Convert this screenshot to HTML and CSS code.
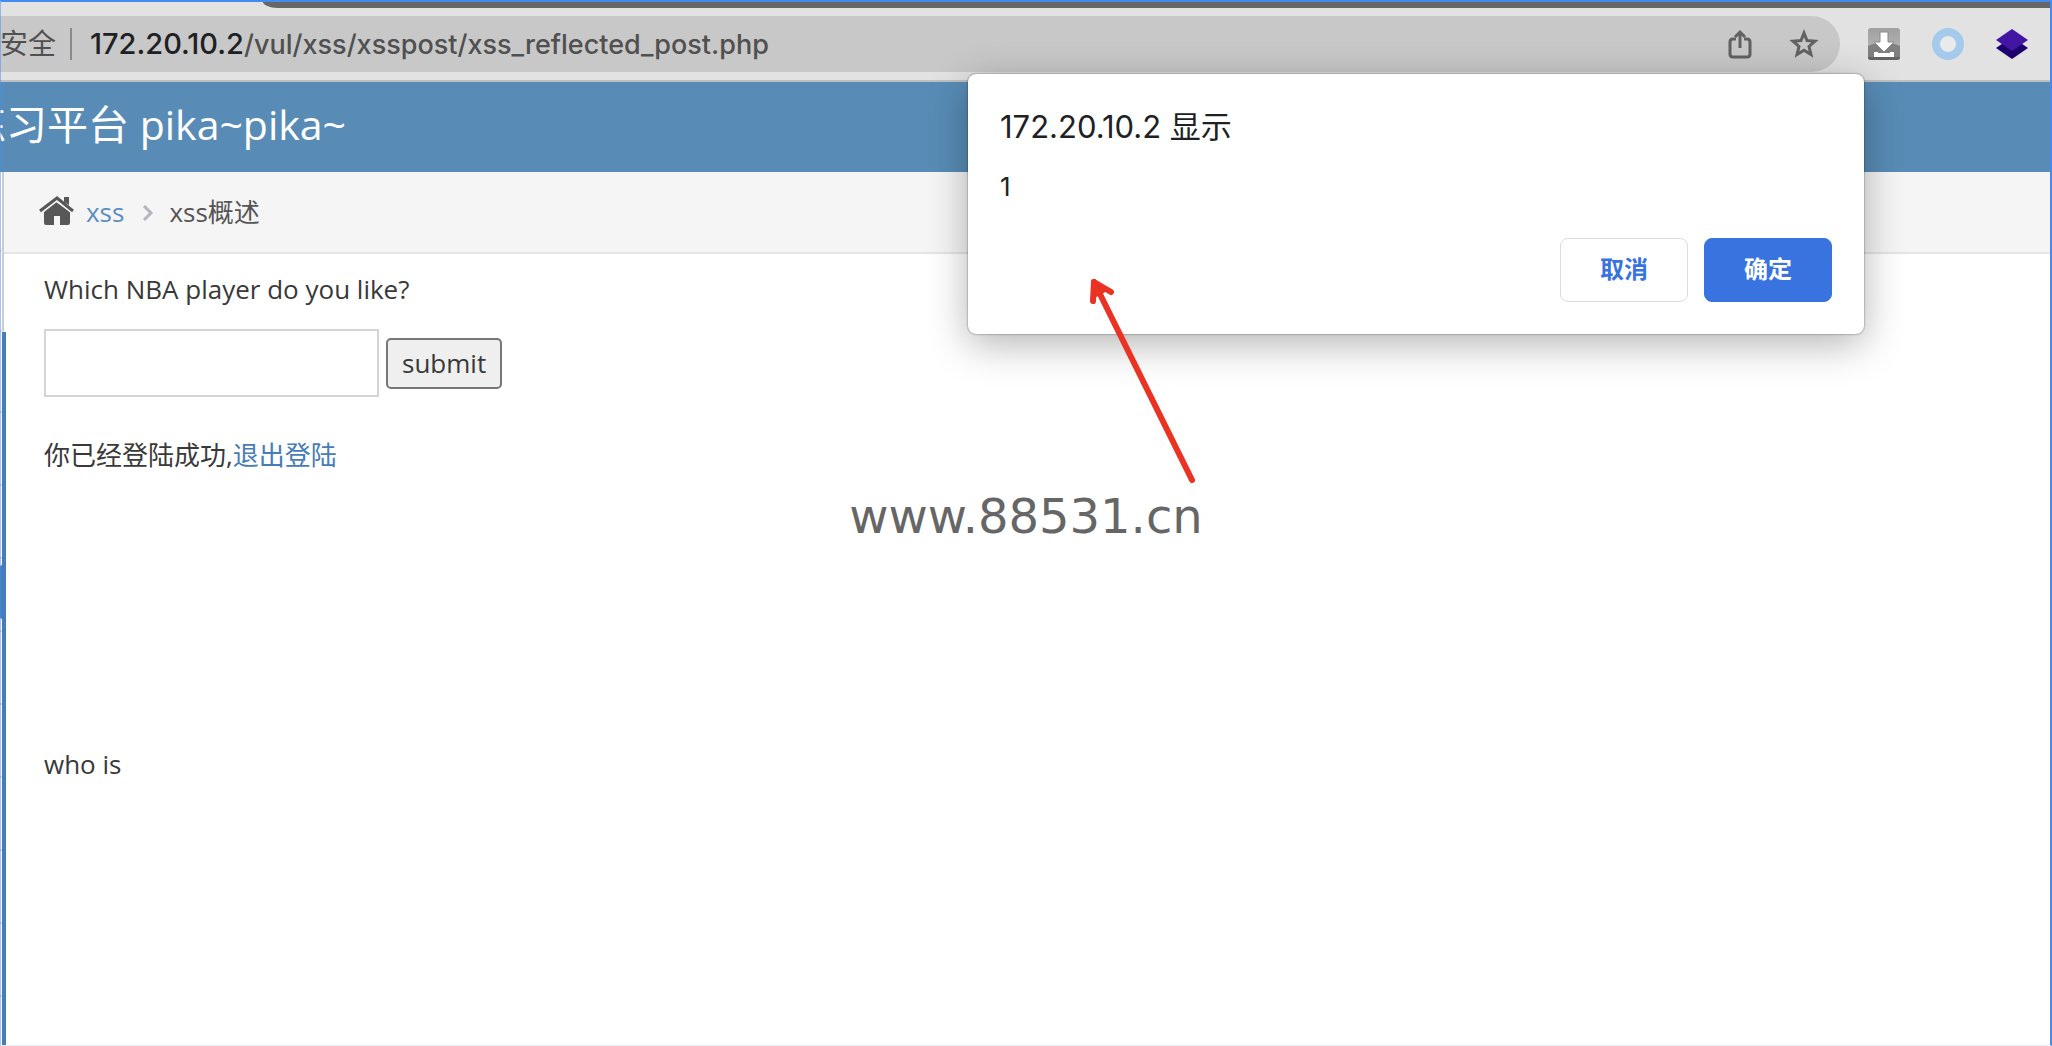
FILE: index.html
```html
<!DOCTYPE html>
<html lang="zh-CN">

<head>
	<meta charset="UTF-8">
	<title>xss概述</title>
	<meta name="viewport" content="width=device-width, initial-scale=1.0">
	<link rel="stylesheet" href="styles.css">
</head>

<body>

	<div class="tabs">
		<div class="tabs-vides"></div>
	</div>

	<div class="barre">
		<div class="adresse">
			<span class="securite">安全</span>
			<span class="url"><strong>172.20.10.2</strong>/vul/xss/xsspost/xss_reflected_post.php</span>
			<button class="icone" type="button" aria-label="分享">
				<svg width="32" height="32" viewBox="0 0 32 32" fill="none" stroke="#616161" stroke-width="3">
					<path d="M12 11H9Q6 11 6 14V26Q6 29 9 29H23Q26 29 26 26V14Q26 11 23 11H20" />
					<path d="M16 20V4M11 9L16 4L21 9" />
				</svg>
			</button>
			<button class="icone" type="button" aria-label="收藏">
				<svg width="32" height="32" viewBox="0 0 32 32" fill="none" stroke="#616161" stroke-width="3">
					<path d="M16 5L19 12.500L27 13.200L21 18.500L23 26.500L16 22.300L9 26.500L11 18.500L5 13.200L13 12.500Z" />
				</svg>
			</button>
		</div>

		<div class="extensions">
			<button class="icone" type="button" aria-label="下载">
				<svg width="32" height="32" viewBox="0 0 32 32">
					<defs>
						<linearGradient id="gris" x1="0" y1="0" x2="0" y2="1">
							<stop offset="0" stop-color="#a0a0a0" />
							<stop offset="1" stop-color="#bdbdbd" />
						</linearGradient>
					</defs>
					<rect width="32" height="32" rx="3" fill="url(#gris)" />
					<path d="M0 18L5 16H27L32 18V29Q32 32 29 32H3Q0 32 0 29Z" fill="#808080" />
					<path d="M0 29H32Q32 32 29 32H3Q0 32 0 29Z" fill="#646464" />
					<path d="M12 4H20V14H26L16 24L6 14H12Z" fill="#fff" stroke="#8a8a8a" />
					<path d="M6 24H10V25H22V24H26V29H6Z" fill="#fff" />
				</svg>
			</button>
			<button class="icone" type="button" aria-label="圆环">
				<svg width="32" height="32" viewBox="0 0 32 32">
					<circle cx="16" cy="16" r="12" fill="#e8eaec" stroke="#a4caec" stroke-width="8" />
				</svg>
			</button>
			<button class="icone" type="button" aria-label="图层">
				<svg width="32" height="32" viewBox="0 0 32 32">
					<path d="M0 20L16 9L32 20L16 31Z" fill="#1d006b" />
					<path d="M0 12L16 1L32 12L16 23Z" fill="#4315a5" />
				</svg>
			</button>
		</div>
	</div>
	<!-- /BARRE -->

	<header class="entete">
		<h1>练习平台 pika~pika~</h1>
	</header>

	<div class="global">
		<nav class="menu">
			<ul>
				<li></li>
				<li></li>
			</ul>
			<ul class="sous-menu">
				<li></li>
				<li></li>
				<li></li>
				<li class="actif"></li>
				<li></li>
				<li></li>
				<li></li>
				<li></li>
				<li></li>
			</ul>
		</nav>
		<!-- /MENU -->

		<main class="contenu">
			<div class="fil">
				<svg width="36" height="30" viewBox="0 0 36 30" fill="#585858">
					<path d="M6 16L18 6L32 16V27Q32 29 30 29H22V20H16V29H8Q6 29 6 27Z" />
					<path d="M26 1H31V13L26 9Z" />
					<path d="M2 15L19 2L35 15" fill="none" stroke="#f5f5f5" stroke-width="6" />
					<path d="M2 15L19 2L35 15" fill="none" stroke="#585858" stroke-width="3" />
					<path d="M26 1H31V9L26 6Z" />
				</svg>
				<a href="#">xss</a>
				<svg class="chevron" width="12" height="18" viewBox="0 0 12 18" fill="none" stroke="#b2b6bf" stroke-width="3">
					<path d="M2 2L9 9L2 16" />
				</svg>
				<span>xss概述</span>
			</div>

			<section>
				<form>
					<label for="joueur">Which NBA player do you like?</label>
					<div class="champs">
						<input type="text" id="joueur">
						<button class="envoi" type="button">submit</button>
					</div>
				</form>
				<p>你已经登陆成功,<a href="#">退出登陆</a></p>
				<p class="resultat">who is</p>
			</section>
		</main>
		<!-- /CONTENU -->
	</div>
	<!-- /GLOBAL -->

	<div class="filigrane">www.88531.cn</div>

	<div class="alerte" role="dialog" aria-labelledby="titreAlerte">
		<h2 id="titreAlerte">172.20.10.2 显示</h2>
		<p>1</p>
		<div class="boutons">
			<button type="button">取消</button>
			<button class="principal" type="button">确定</button>
		</div>
	</div>

	<svg class="fleche" width="120" height="220" viewBox="0 0 120 220" fill="none" stroke="#eb3323" stroke-width="6" stroke-linecap="round" stroke-linejoin="round">
		<path d="M14 12L112 210" />
		<path d="M13 31L14 12L31 22" />
		<path d="M14 12L14 27L25 21Z" fill="#eb3323" stroke-width="2" />
	</svg>

</body>

</html>
```
FILE: styles.css
```css
/*Reset*/

* {
	margin: 0;
	padding: 0;
	box-sizing: border-box;
}

body {
	font-family: "Open Sans", "Noto Sans CJK SC", sans-serif;
	font-size: 26px;
	line-height: 40px;
	color: #393939;
	background-color: #fff;
	height: 100vh;
	overflow: hidden;
	/*Conteneur flex en colonne*/
	display: flex;
	flex-direction: column;
}

/*Cadre de la fenêtre*/
body::after {
	content: "";
	position: fixed;
	inset: 0;
	border: 1px solid rgba(66, 139, 245, 0.5);
	border-top: 2px solid #428bf0;
	border-right: 2px solid #428bf0;
	border-bottom-color: #e6effb;
	pointer-events: none;
}

button,
input {
	font: inherit;
	color: inherit;
}

a {
	color: #467cb8;
	text-decoration: none;
}

ul {
	list-style: none;
}

svg {
	display: block;
}

/*Navigateur*/

.tabs {
	flex: none;
	height: 8px;
	background-color: #e2e2e2;
}

.tabs-vides {
	height: 8px;
	margin-left: 262px;
	background-color: #666;
	border-bottom-left-radius: 16px 8px;
}

.barre {
	flex: none;
	display: flex;
	align-items: center;
	gap: 28px;
	height: 74px;
	padding: 8px 24px 8px 0;
	background-color: #e2e2e2;
	border-bottom: 2px solid #bfbfbf;
	font-family: Inter, "Noto Sans CJK SC", sans-serif;
	font-size: 28px;
}

.adresse {
	flex: 1;
	display: flex;
	align-items: center;
	gap: 32px;
	height: 56px;
	padding-right: 20px;
	background-color: #c8c8c8;
	border-radius: 0 28px 28px 0;
	color: #505050;
}

.securite {
	line-height: 32px;
	padding-right: 14px;
	border-right: 2px solid #8a8a8a;
}

.url {
	flex: 1;
	margin-left: -14px;
	font-size: 27px;
	font-weight: 500;
}

.url strong {
	font-size: 29px;
	font-weight: 500;
	color: #202124;
}

.extensions {
	display: flex;
	gap: 32px;
}

.icone {
	background: none;
	border: none;
	cursor: pointer;
}

/*Page*/

.entete {
	flex: none;
	height: 90px;
	background-color: #588cb6;
	color: #fff;
}

.entete h1 {
	margin-left: -35px;
	font-size: 41px;
	font-weight: 400;
	line-height: 84px;
}

.global {
	flex: 1;
	min-height: 0;
	display: flex;
}

.menu {
	width: 4px;
	flex: none;
	position: relative;
	display: flex;
	flex-direction: column;
}

.menu li {
	height: 80px;
	border-right: 2px solid #ccc;
	border-bottom: 2px solid #e5e5e5;
}

.menu .sous-menu {
	flex: 1;
	width: 6px;
	padding-top: 8px;
	border-right: 4px solid #467cb8;
}

.menu .sous-menu li {
	height: 73px;
	border-right: none;
	border-bottom-color: #d5deea;
}

.menu .sous-menu .actif {
	padding: 6px 0;
}

.actif::after {
	content: "";
	display: block;
	height: 54px;
	background-color: #467cb8;
	border-radius: 2px 0 0 2px;
}

.contenu {
	flex: 1;
}

.fil {
	display: flex;
	align-items: center;
	height: 82px;
	padding: 0 34px;
	background-color: #f5f5f5;
	border-bottom: 2px solid #e5e5e5;
	color: #555;
}

.fil svg {
	margin-bottom: 2px;
}

.fil a {
	margin-left: 12px;
	color: #5a8fc0;
}

.fil .chevron {
	margin: 2px 15px 0 18px;
}

section {
	padding: 15px 40px;
}

.champs {
	display: flex;
	align-items: center;
	gap: 7px;
	margin: 20px 0 38px;
}

.champs input {
	width: 335px;
	height: 68px;
	padding: 8px;
	border: 2px solid #d5d5d5;
}

.envoi {
	height: 51px;
	padding: 0 14px;
	background-color: #efefef;
	border: 2px solid #767676;
	border-radius: 5px;
}

.resultat {
	margin-top: 269px;
}

/*Éléments par-dessus la page*/

.filigrane {
	position: absolute;
	top: 488px;
	left: 0;
	width: 100%;
	text-align: center;
	font-family: "DejaVu Sans", sans-serif;
	font-size: 48px;
	line-height: 56px;
	color: #666;
}

.alerte {
	position: absolute;
	top: 74px;
	right: 188px;
	width: 896px;
	padding: 32px;
	background-color: #fff;
	border-radius: 8px;
	box-shadow: 0 0 2px rgba(0, 0, 0, 0.6), 0 10px 40px rgba(0, 0, 0, 0.3);
	font-family: Inter, "Noto Sans CJK SC", sans-serif;
	color: #202124;
}

.alerte h2 {
	font-size: 31px;
	font-weight: 400;
	line-height: 42px;
}

.alerte p {
	margin: 19px 0 31px;
}

.boutons {
	display: flex;
	justify-content: flex-end;
	gap: 16px;
}

.boutons button {
	width: 128px;
	height: 64px;
	background-color: #fff;
	border: 1px solid #dadce0;
	border-radius: 8px;
	font-size: 24px;
	font-weight: 700;
	color: #3873e0;
}

.boutons .principal {
	background-color: #3873e0;
	border-color: #3873e0;
	color: #fff;
}

.fleche {
	position: absolute;
	top: 270px;
	right: 852px;
}
```
